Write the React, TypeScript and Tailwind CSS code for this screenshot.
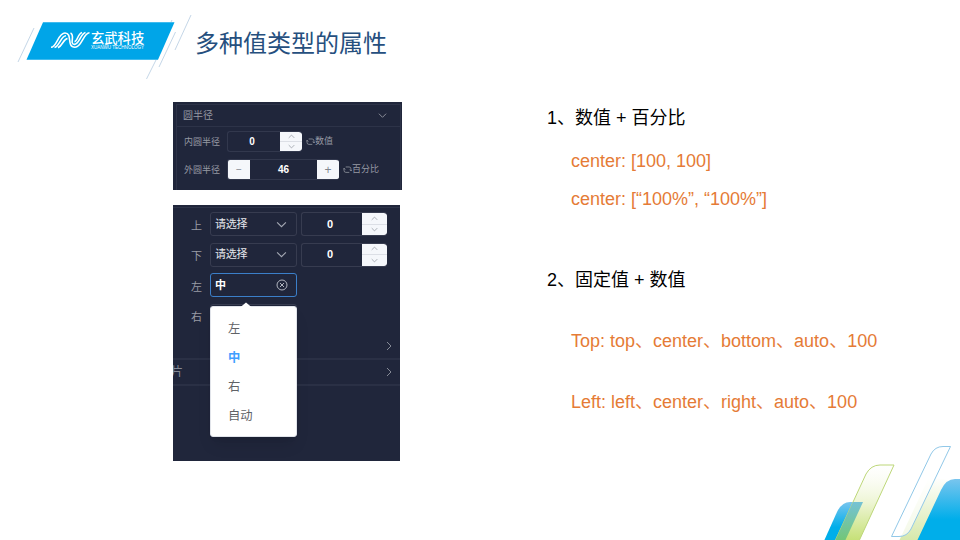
import type { ReactNode } from 'react';

const FONT = "font-['Liberation_Sans','Noto_Sans_CJK_SC',sans-serif]";

function Chevron({ dir, className = '' }: { dir: 'up' | 'down' | 'right'; className?: string }) {
  const d = dir === 'up' ? 'M1 7 L5 3 L9 7' : dir === 'down' ? 'M1 3 L5 7 L9 3' : 'M3 1 L7 5 L3 9';
  return (
    <svg viewBox="0 0 10 10" className={'shrink-0 ' + className} fill="none" stroke="currentColor" strokeWidth="1">
      <path d={d} />
    </svg>
  );
}

function Swap() {
  return (
    <svg viewBox="0 0 10 10" className="w-[9px] h-[9px] shrink-0" fill="none" stroke="#858993" strokeWidth="1">
      <path d="M3 2.2 H6.8 Q8.8 2.2 8.8 4.2 V6.5 M7.3 5.2 L8.8 6.7 L10 5.4 M7 8.2 H3.2 Q1.2 8.2 1.2 6.2 V3.7 M0 5 L1.2 3.6 L2.7 5" />
    </svg>
  );
}

function Spinner() {
  return (
    <div className="flex flex-col bg-[#f5f7fb] text-[#8d929b] rounded-r-[3px]">
      <div className="flex flex-1 items-center justify-center border-b border-[#dcdfe6]"><Chevron dir="up" className="w-[7px] h-[7px]" /></div>
      <div className="flex flex-1 items-center justify-center"><Chevron dir="down" className="w-[7px] h-[7px]" /></div>
    </div>
  );
}

function NumberField() {
  return (
    <div className="grid grid-cols-[1fr_25px] w-[86px] h-[24px] border border-r-0 border-[#373c50] rounded-[3px] overflow-hidden text-white font-bold text-[11px]">
      <div className="flex items-center justify-center pr-[4px]">0</div>
      <Spinner />
    </div>
  );
}

function SelectRow({ label, children }: { label: string; children?: ReactNode }) {
  return (
    <div className="flex h-[30.5px] items-start">
      <div className="w-[37px] pl-[18px] pt-[4.5px] text-[11px] leading-[18px] text-[#989ba5]">{label}</div>
      {children}
    </div>
  );
}

function SelectBox() {
  return (
    <div className="flex items-center justify-between w-[87px] h-[24px] pl-[4px] pr-[9px] mr-[4px] border border-[#373c50] rounded-[3px] text-[11px] text-[#e4e6ec]">
      <span className="tracking-[-0.3px]">请选择</span>
      <Chevron dir="down" className="w-[11px] h-[11px] text-[#a5a9b4]" />
    </div>
  );
}

function RadiusPanel() {
  return (
    <section className="w-[229px] h-[88px] bg-[#20263b] text-[#9699a3] text-[10px] pt-[2px] pl-[3px] overflow-hidden">
      <div className="w-[225px] h-[86px] border-t border-x border-[#2d3348]">
        <div className="flex items-center justify-between h-[22px] pl-[6px] pr-[13px] border-b border-[#2d3348]">
          <span>圆半径</span>
          <Chevron dir="down" className="w-[9px] h-[9px]" />
        </div>
        <div className="flex items-center h-[21px] mt-[4px] pl-[7px]">
          <span className="w-[43px] text-[9px] pt-[3px]">内圆半径</span>
          <div className="grid grid-cols-[1fr_22px] w-[75px] h-[21px] border border-r-0 border-[#32384d] rounded-[3px] overflow-hidden">
            <div className="flex items-center justify-center pr-[4px] font-bold text-white">0</div>
            <Spinner />
          </div>
          <div className="flex items-center ml-[4px] text-[9px]"><Swap />数值</div>
        </div>
        <div className="flex items-center h-[21px] mt-[7px] pl-[7px]">
          <span className="w-[43px] text-[9px] pt-[3px]">外圆半径</span>
          <div className="grid grid-cols-[22px_1fr_22px] w-[112px] h-[21px] border border-r-0 border-[#32384d] rounded-[3px] overflow-hidden">
            <div className="flex items-center justify-center bg-[#f5f7fb] text-[#80858f]">−</div>
            <div className="flex items-center justify-center font-bold text-white">46</div>
            <div className="flex items-center justify-center bg-[#f5f7fb] text-[#80858f] text-[12px]">+</div>
          </div>
          <div className="flex items-center ml-[4px] text-[9px]"><Swap />百分比</div>
        </div>
      </div>
    </section>
  );
}

function PositionPanel() {
  return (
    <section className="relative w-[227px] h-[256px] mt-[15px] bg-[#20263b] overflow-hidden">
      <div className="h-[7px] pt-[2px]"><div className="h-px bg-[#2d3348]" /></div>
      <SelectRow label="上"><SelectBox /><NumberField /></SelectRow>
      <SelectRow label="下"><SelectBox /><NumberField /></SelectRow>
      <SelectRow label="左">
        <div className="flex items-center justify-between w-[87px] h-[24px] pl-[4px] pr-[8px] border border-[#3b7fc9] rounded-[3px] text-[11px] font-bold text-white">
          <span>中</span>
          <svg viewBox="0 0 12 12" className="w-3 h-3" fill="none" stroke="#b1b5bf" strokeWidth="1">
            <circle cx="6" cy="6" r="5" /><path d="M4 4 L8 8 M8 4 L4 8" />
          </svg>
        </div>
      </SelectRow>
      <SelectRow label="右">
        <div className="w-[87px] h-[24px] border border-[#373c50] rounded-[3px]" />
      </SelectRow>
      <div className="flex items-center justify-end h-[26px] pr-[6px] border-b-2 border-[#2a3045] text-[#858a96]">
        <Chevron dir="right" className="w-[10px] h-[10px]" />
      </div>
      <div className="flex items-center justify-between h-[26px] pr-[6px] border-b-2 border-[#2a3045] text-[#858a96]">
        <span className="-ml-[2px] text-[12px]">片</span>
        <Chevron dir="right" className="w-[10px] h-[10px]" />
      </div>
      <div className="absolute left-[37px] top-[101px] w-[87px] h-[131px] pt-[7.5px] bg-white border border-[#e1e4ea] rounded-[3px] text-[12.3px] leading-[29.3px] text-[#606266] shadow-lg">
        <svg viewBox="0 0 12 6" className="absolute left-[29px] -top-[6px] w-3 h-[7px]"><path d="M0 6 L6 1 L12 6Z" fill="white" /></svg>
        <div className="pl-[17px]">左</div>
        <div className="pl-[17px] font-bold text-[#409eff]">中</div>
        <div className="pl-[17px]">右</div>
        <div className="pl-[17px]">自动</div>
      </div>
    </section>
  );
}

function Logo() {
  return (
    <svg viewBox="0 0 195 90" className="w-[195px] h-[90px]">
      <path d="M43 22.3 H174.5 L158 59.7 H26.5Z" fill="#00a5e8" />
      <g stroke="#b5cbe1" strokeWidth="0.8">
        <path d="M34 28 L18 62 M172 20 L171 22 M191 15 L175 50 M175.5 32 L159 67 M156 60 L146.5 79" />
      </g>
      <g fill="none" stroke="white" strokeWidth="1.6">
        <path d="M51 47.3 C57 47 58 33 65 33 C73 33 66 47.200 75 47.200 C82 47.200 83 33 89.500 32.700" />
        <path d="M54.500 47.600 C59.500 46 61 35.800 66 35.800 M85.500 32.500 C80.500 34 79 44.400 74.500 44.400 C69 44.400 75.500 35 70.500 33" />
        <path d="M58 47.700 C62.500 46 63.500 38.600 67.500 38.600 M82 32.500 C77.500 34 77.500 41.600 74.500 41.600" />
      </g>
      <text x="91" y="42.7" fill="white" fontSize="13.3" fontWeight="500" fontFamily="Noto Sans CJK SC, sans-serif">玄武科技</text>
      <text x="91" y="48.8" fill="white" fontSize="4.8" textLength="53" lengthAdjust="spacingAndGlyphs" fontFamily="Liberation Sans, sans-serif">XUANWU TECHNOLOGY</text>
    </svg>
  );
}

function CornerArt() {
  return (
    <svg viewBox="800 430 160 110" className="absolute right-0 bottom-0 w-[160px] h-[110px]">
      <defs>
        <linearGradient id="blue" x2="0" y2="1"><stop stopColor="#79c5ee" /><stop offset=".65" stopColor="#00aeea" /></linearGradient>
        <linearGradient id="green" x2="0" y2="1"><stop stopColor="#fff" stopOpacity=".4" /><stop offset=".5" stopColor="#edf5d3" /><stop offset="1" stopColor="#c5e075" /></linearGradient>
        <linearGradient id="pale" x2="0" y2="1"><stop stopColor="#fff" /><stop offset="1" stopColor="#d6e8aa" /></linearGradient>
        <linearGradient id="overlap" x2="0" y2="1"><stop stopColor="#75c2d5" /><stop offset="1" stopColor="#72c675" /></linearGradient>
      </defs>
      <path d="M824 541 L837 512 Q842 502 850 502 H863 L845 541Z" fill="url(#blue)" />
      <path d="M835 541 L866 474 Q871 465 880 465 H894 L859 541Z" fill="url(#green)" stroke="#bdd779" />
      <path d="M835 541 L853 502 H863 L845 541Z" fill="url(#overlap)" />
      <path d="M899 541 L929 477 L948 480 L918 541Z" fill="url(#pale)" />
      <path d="M917 541 L941 490 Q946 479 955 479 H961 V541Z" fill="url(#blue)" />
      <path d="M891.5 536.5 L931 454 Q935 446.500 943 446.500 H950.500 L911 529 Q907 536.500 899 536.500Z" fill="white" fillOpacity=".7" stroke="#91c8e8" />
    </svg>
  );
}

export default function App() {
  return (
    <main className={'relative w-[960px] h-[540px] overflow-hidden bg-white ' + FONT}>
      <header className="flex h-[102px]">
        <Logo />
        <h1 className="pt-[26px] text-[24px] leading-[36px] text-[#264f7e] font-normal">多种值类型的属性</h1>
      </header>
      <div className="flex pl-[173px]">
        <div className="w-[374px]"><RadiusPanel /><PositionPanel /></div>
        <div lang="zh-CN" className="text-[18px] leading-[24px] whitespace-nowrap">
          <h2 className="mt-[4px] text-black">1、数值 + 百分比</h2>
          <div className="pl-[24px] text-[#e57b36]">
            <p className="mt-[19px]">center: [100, 100]</p>
            <p className="mt-[14px]">center: [“100%”, “100%”]</p>
          </div>
          <h2 className="mt-[57px] text-black">2、固定值 + 数值</h2>
          <div className="pl-[24px] text-[#e57b36]">
            <p className="mt-[37px]">Top: top、center、bottom、auto、100</p>
            <p className="mt-[37px]">Left: left、center、right、auto、100</p>
          </div>
        </div>
      </div>
      <CornerArt />
    </main>
  );
}
